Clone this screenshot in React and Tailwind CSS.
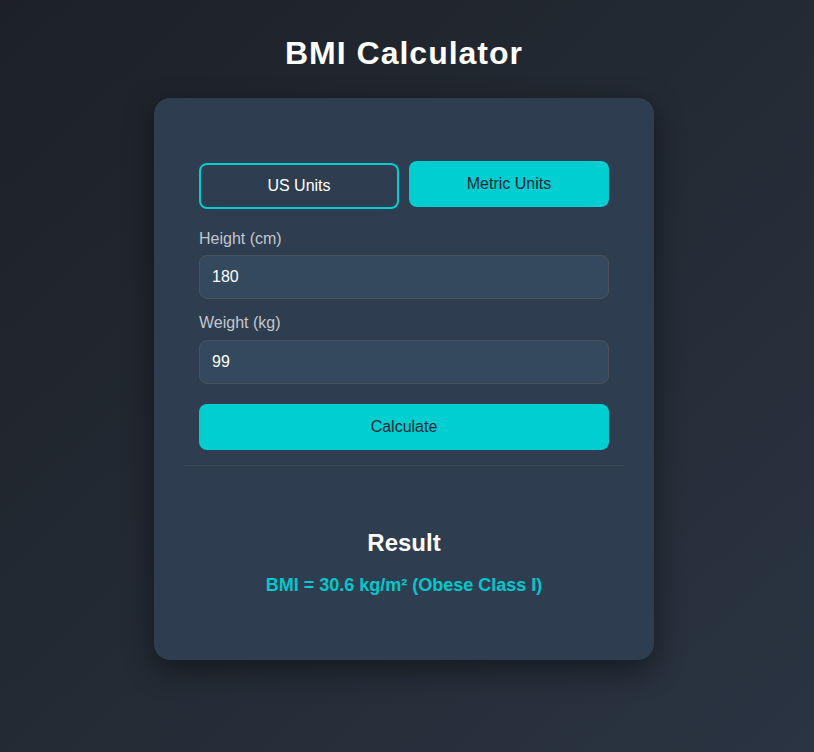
import React, { useState } from 'react';

export default function App() {
  const [unit, setUnit] = useState('metric');
  const [height, setHeight] = useState('180');
  const [weight, setWeight] = useState('99');

  return (
    <div className="min-h-[752px] pr-[6px] bg-gradient-to-br from-[#1d2127] to-[#2a3442] font-['Liberation_Sans',Arial,sans-serif]">
      <h1 className="pt-[35px] pb-[26px] text-center text-[32px] leading-[37px] font-bold tracking-[1px] text-white">
        BMI Calculator
      </h1>

      <div className="mx-auto w-[500px] rounded-[16px] bg-[#2e3d50] px-[30px] py-[30px] shadow-[0_10px_30px_rgba(0,0,0,0.45)]">
        <div className="px-[15px] pt-[35px] pb-[15px]">
          <div className="grid grid-cols-2 gap-[10px]">
            <button
              onClick={() => setUnit('us')}
              className={
                unit === 'us'
                  ? 'h-[46px] -translate-y-[2px] rounded-[8px] bg-[#00ced1] text-[16px] text-[#1c2733]'
                  : 'h-[46px] rounded-[8px] border-2 border-[#00ced1] text-[16px] text-white'
              }
            >
              US Units
            </button>
            <button
              onClick={() => setUnit('metric')}
              className={
                unit === 'metric'
                  ? 'h-[46px] -translate-y-[2px] rounded-[8px] bg-[#00ced1] text-[16px] text-[#1c2733]'
                  : 'h-[46px] rounded-[8px] border-2 border-[#00ced1] text-[16px] text-white'
              }
            >
              Metric Units
            </button>
          </div>

          <label className="mt-[21px] mb-[7px] block text-[16px] leading-[18px] text-[#c3c7cd]">
            Height (cm)
          </label>
          <input
            value={height}
            onChange={(e) => setHeight(e.target.value)}
            className="block h-[44px] w-full rounded-[8px] border border-[#4b5158] bg-[#34495e] px-[12px] text-[16px] text-white outline-none"
          />

          <label className="mt-[15px] mb-[8px] block text-[16px] leading-[18px] text-[#c3c7cd]">
            Weight (kg)
          </label>
          <input
            value={weight}
            onChange={(e) => setWeight(e.target.value)}
            className="block h-[44px] w-full rounded-[8px] border border-[#4b5158] bg-[#34495e] px-[12px] text-[16px] text-white outline-none"
          />

          <button className="mt-[20px] h-[46px] w-full rounded-[8px] bg-[#00ced1] text-[16px] text-[#1c2733]">
            Calculate
          </button>
        </div>

        <div className="border-t border-[#3b4858]" />

        <div className="pt-[63px] pb-[34px] text-center">
          <h2 className="text-[24px] leading-[28px] font-bold text-white">Result</h2>
          <p className="mt-[18px] text-[18px] leading-[21px] font-bold text-[#00c8cc]">
            BMI = 30.6 kg/m² (Obese Class I)
          </p>
        </div>
      </div>
    </div>
  );
}
